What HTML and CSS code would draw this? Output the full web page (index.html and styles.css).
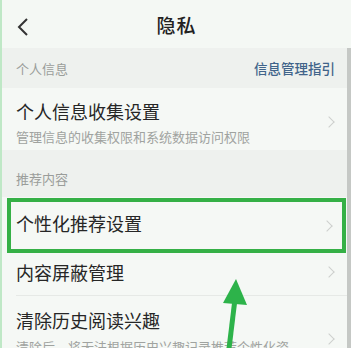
FILE: index.html
```html
<!DOCTYPE html>
<html lang="zh">
<head>
<meta charset="utf-8">
<link rel="stylesheet" href="styles.css">
</head>
<body>
<div class="screen">
  <header class="topbar">
    <svg class="back" width="14" height="20" viewBox="0 0 14 20"><path d="M11 2 L3 10 L11 18" fill="none" stroke="#333" stroke-width="2"/></svg>
    <div class="title">隐私</div>
  </header>
  <div class="body">
    <div class="section">
      <span>个人信息</span>
      <span class="link">信息管理指引</span>
    </div>
    <div class="row tall">
      <div class="texts">
        <div class="rtitle">个人信息收集设置</div>
        <div class="sub">管理信息的收集权限和系统数据访问权限</div>
      </div>
      <span class="chev"></span>
    </div>
    <div class="section sec2"><span>推荐内容</span></div>
    <div class="row hl">
      <div class="texts"><div class="rtitle">个性化推荐设置</div></div>
      <span class="chev"></span>
    </div>
    <div class="row mid">
      <div class="texts"><div class="rtitle">内容屏蔽管理</div></div>
      <span class="chev"></span>
    </div>
    <div class="row last">
      <div class="texts">
        <div class="rtitle">清除历史阅读兴趣</div>
        <div class="sub">清除后，将无法根据历史兴趣记录推荐个性化资</div>
      </div>
      <span class="chev"></span>
    </div>
    <div class="scroll"></div>
  </div>
  <svg class="arrow" width="40" height="80" viewBox="0 0 40 80"><path d="M14 80 L21 22" stroke="#2db34a" stroke-width="5" fill="none"/><path d="M22 2 L9 26 L33 28 Z" fill="#2db34a"/></svg>
</div>
</body>
</html>
```
FILE: styles.css
```css
html, body { margin: 0; padding: 0; }
body { width: 351px; height: 348px; overflow: hidden; background: #f5f8f5; font-family: "Noto Sans CJK SC", "Noto Sans", sans-serif; }
.screen { position: relative; width: 351px; height: 348px; overflow: hidden; border-left: 2px solid #bfe8c6; box-sizing: border-box; }
.topbar { height: 48px; display: flex; align-items: center; justify-content: center; background: #f4f8f4; position: relative; }
.back { position: absolute; left: 14px; top: 17px; }
.title { font-size: 19px; font-weight: 500; color: #222; letter-spacing: 1px; }
.body { position: relative; }
.section { height: 40px; background: #eef1ee; display: flex; align-items: center; justify-content: space-between; padding: 0 14px 0 14px; font-size: 13px; color: #9a9d9a; }
.section .link { color: #41648a; font-weight: 500; font-size: 13.5px; margin-right: 2px; }
.sec2 { height: 47px; padding-top: 10px; box-sizing: border-box; }
.row { display: flex; align-items: center; justify-content: space-between; padding: 0 14px; background: #f5f8f5; box-sizing: border-box; }
.row.tall { height: 62px; padding-top: 6px; }
.rtitle { font-size: 18px; color: #262626; }
.sub { font-size: 13px; color: #a0a3a0; margin-top: 4px; }
.row.tall .sub { margin-top: 3px; }
.row.hl { height: 55px; margin: 1px 5px 0 5px; border: 4px solid #35b046; padding: 0 7px 6px 5px; }
.row.hl .chev { margin-top: 6px; }
.row.mid { height: 43px; position: relative; padding-bottom: 5px; }
.row.mid::after { content: ""; position: absolute; left: 14px; right: 0; bottom: 0; height: 1px; background: #e6e9e6; }
.row.last { height: 60px; padding-top: 11px; align-items: flex-start; }
.row.last .chev { margin-top: 28px; }
.chev { width: 7px; height: 7px; border-right: 1.5px solid #cdcfcd; border-top: 1.5px solid #cdcfcd; transform: rotate(45deg); margin-right: 4px; flex: none; }
.scroll { position: absolute; right: 0; top: 0; width: 4px; height: 300px; background: #c5c8c5; }
.arrow { position: absolute; left: 212px; top: 277px; }
```
